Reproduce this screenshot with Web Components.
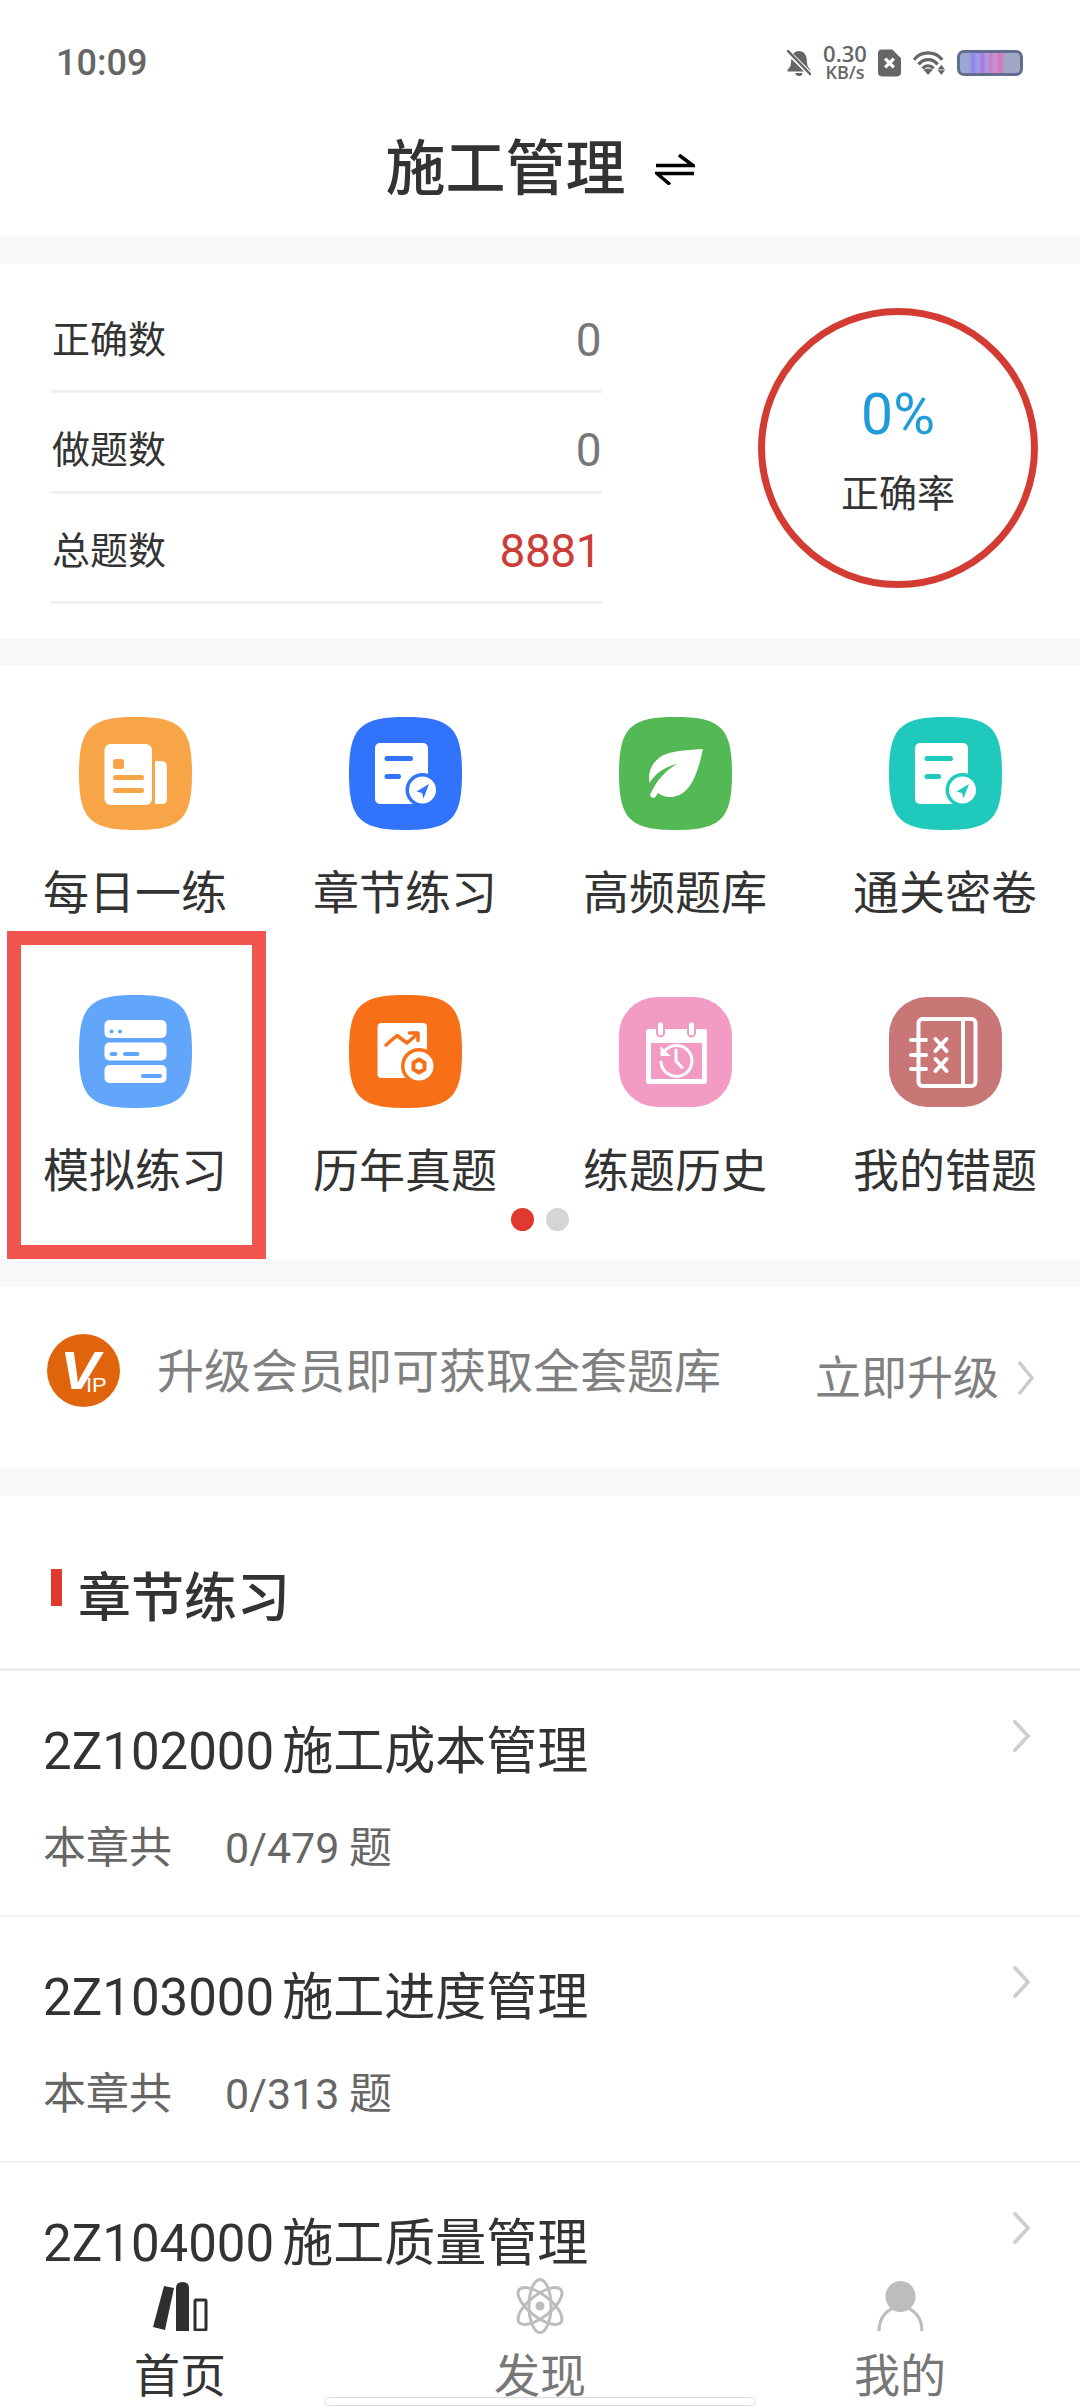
<!DOCTYPE html>
<html lang="zh-CN">
<head>
<meta charset="utf-8">
<title>施工管理</title>
<style>
  html, body { margin: 0; padding: 0; }
  body {
    width: 1080px;
    height: 2408px;
    overflow: hidden;
    background: #f8f8f8;
    color: #333;
    font-family: Roboto, "Noto Sans CJK SC", sans-serif;
  }
</style>
</head>
<body>
<app-shell>
  <status-bar time="10:09"></status-bar>
  <title-bar>施工管理</title-bar>

  <stats-card>
    <stat-row label="正确数" value="0" style="--h:129px;--pt:26px"></stat-row>
    <stat-row label="做题数" value="0" style="--h:101px;--pt:16px"></stat-row>
    <stat-row label="总题数" value="8881" style="--h:110px;--pt:7px;--value:#cc3d38"></stat-row>
  </stats-card>

  <feature-grid>
    <feature-tile label="每日一练" color="#f8a548">
      <svg viewBox="0 0 113 113">
        <path fill="#fff" d="M76 44h6q6 0 6 6v32q0 5-5 5h-7z"/>
        <rect x="25.500" y="27" width="47.500" height="61" rx="6" fill="#fff"/>
        <rect x="34" y="42" width="11" height="10" rx="2.500" fill="#f8a548"/>
        <rect x="34" y="58" width="31" height="5" rx="2.500" fill="#f8a548"/>
        <rect x="34" y="71" width="31" height="5" rx="2.500" fill="#f8a548"/>
      </svg>
    </feature-tile>
    <feature-tile label="章节练习" color="#3174fb">
      <svg viewBox="0 0 113 113">
        <rect x="26" y="26" width="53" height="61" rx="5" fill="#fff"/>
        <rect x="35.500" y="39" width="28.500" height="5" rx="2.500" fill="#3174fb"/>
        <rect x="35.500" y="57" width="16.500" height="5" rx="2.500" fill="#3174fb"/>
        <circle cx="73.500" cy="73" r="17" fill="#3174fb"/>
        <circle cx="73.500" cy="73" r="13.500" fill="#fff"/>
        <path fill="#3174fb" d="M80 67 67.500 74.500l5.500 1.500 1.500 5.500z"/>
      </svg>
    </feature-tile>
    <feature-tile label="高频题库" color="#53b954">
      <svg viewBox="0 0 113 113">
        <path fill="#fff" d="M84 32C72 33 50 33 40 41 31 48 29 57 30.500 66 36 57 45 50 58 47 47 53 37 64 31 78c0 3 5 4 6 1l2-3c8 6 21 6 30-5 8-9 12-26 15-39z"/>
      </svg>
    </feature-tile>
    <feature-tile label="通关密卷" color="#1fc9bc">
      <svg viewBox="0 0 113 113">
        <rect x="26" y="26" width="53" height="61" rx="5" fill="#fff"/>
        <rect x="35.500" y="39" width="28.500" height="5" rx="2.500" fill="#1fc9bc"/>
        <rect x="35.500" y="57" width="16.500" height="5" rx="2.500" fill="#1fc9bc"/>
        <circle cx="73.500" cy="73" r="17" fill="#1fc9bc"/>
        <circle cx="73.500" cy="73" r="13.500" fill="#fff"/>
        <path fill="#1fc9bc" d="M80 67 67.500 74.500l5.500 1.500 1.500 5.500z"/>
      </svg>
    </feature-tile>

    <feature-tile label="模拟练习" color="#62a6fc">
      <svg viewBox="0 0 113 113">
        <rect x="25.500" y="25" width="62" height="18" rx="5" fill="#fff"/>
        <rect x="25.500" y="47.500" width="62" height="18" rx="5" fill="#fff"/>
        <rect x="25.500" y="70" width="62" height="18" rx="5" fill="#fff"/>
        <circle cx="32.500" cy="36.500" r="2" fill="#62a6fc"/>
        <circle cx="41" cy="36.500" r="2" fill="#62a6fc"/>
        <rect x="30.500" y="57" width="8" height="4" rx="2" fill="#62a6fc"/>
        <rect x="44" y="57" width="16.500" height="4" rx="2" fill="#62a6fc"/>
        <rect x="62" y="79" width="21" height="4" rx="2" fill="#62a6fc"/>
      </svg>
    </feature-tile>
    <feature-tile label="历年真题" color="#f76f17">
      <svg viewBox="0 0 113 113">
        <rect x="28.500" y="28" width="49.500" height="55" rx="4" fill="#fff"/>
        <path fill="none" stroke="#f76f17" stroke-width="3.500" stroke-linecap="round" stroke-linejoin="round" d="M37 50 48 40.500 58 48 69 38.500M60.500 38H69v7.500"/>
        <circle cx="70" cy="71" r="18" fill="#f76f17"/>
        <circle cx="70" cy="71" r="14.500" fill="#fff"/>
        <path fill="none" stroke="#f76f17" stroke-width="4" stroke-linejoin="round" d="M70 64.500l5.500 3.200v6.600L70 77.500l-5.500-3.200v-6.600z"/>
      </svg>
    </feature-tile>
    <feature-tile label="练题历史" color="#f29cc3" shape="round">
      <svg viewBox="0 0 113 110">
        <path fill="#fff" d="M30 32h55q3 0 3 3v49q0 3-3 3H30q-3 0-3-3V35q0-3 3-3zm2 14v36h51V46z"/>
        <rect x="38" y="24.500" width="7" height="15" rx="3.500" fill="#fff" stroke="#f29cc3" stroke-width="2"/>
        <rect x="69" y="24.500" width="7" height="15" rx="3.500" fill="#fff" stroke="#f29cc3" stroke-width="2"/>
        <path fill="none" stroke="#fff" stroke-width="3" stroke-linecap="round" d="M46 53.500A15.500 15.500 0 1 1 42 65M57 53v11l6 6.500"/>
        <path fill="#fff" d="M41.500 49v10h10z"/>
      </svg>
    </feature-tile>
    <feature-tile label="我的错题" color="#c87676" shape="round">
      <svg viewBox="0 0 113 110">
        <rect x="29.500" y="22" width="57" height="67" rx="4" fill="none" stroke="#fff" stroke-width="4"/>
        <path fill="none" stroke="#fff" stroke-width="4" stroke-linecap="round" d="M74 23v66M22 43h15M22 58h15M22 72h15M46.500 42l11 12M57.500 42l-11 12M46.500 62l11 12M57.500 62l-11 12"/>
      </svg>
    </feature-tile>
  </feature-grid>

  <vip-banner action="立即升级">升级会员即可获取全套题库</vip-banner>

  <section-head>章节练习</section-head>
  <chapter-row code="2Z102000" name="施工成本管理" count="0/479"></chapter-row>
  <chapter-row code="2Z103000" name="施工进度管理" count="0/313"></chapter-row>
  <chapter-row code="2Z104000" name="施工质量管理"></chapter-row>

  <tab-bar slot="tabs">
    <tab-item label="首页" active>
      <svg width="55" height="49" viewBox="0 0 55 49">
        <path fill="#2f2f2f" d="M11 4l10 2-9 42-12-3z"/>
        <path fill="#2f2f2f" d="M23 6q0-6 6.500-6T36 6v43H23z"/>
        <rect x="42" y="18" width="11" height="30" rx="1" fill="none" stroke="#2f2f2f" stroke-width="3"/>
      </svg>
    </tab-item>
    <tab-item label="发现">
      <svg width="54" height="56" viewBox="-27 -28 54 56">
        <g fill="none" stroke="#bdbdbd" stroke-width="3">
          <ellipse rx="11" ry="26.500"/>
          <ellipse rx="11" ry="26.500" transform="rotate(52)"/>
          <ellipse rx="11" ry="26.500" transform="rotate(-52)"/>
        </g>
        <circle r="4.500" fill="#bdbdbd"/>
      </svg>
    </tab-item>
    <tab-item label="我的">
      <svg width="47" height="50" viewBox="0 0 47 50">
        <ellipse cx="23.500" cy="15.500" rx="15" ry="15.500" fill="#bdbdbd"/>
        <path fill="none" stroke="#bdbdbd" stroke-width="3" d="M2 50C2 36 11 26 23.500 26S45 36 45 50"/>
      </svg>
    </tab-item>
  </tab-bar>
</app-shell>

<script>
class AppShell extends HTMLElement {
  constructor() {
    super();
    this.attachShadow({ mode: 'open' });
    this.shadowRoot.innerHTML = `
      <style>
        :host { display: flex; flex-direction: column; height: 2408px; }
        .content { flex: 1; min-height: 0; overflow: hidden; }
      </style>
      <div class="content"><slot></slot></div>
      <slot name="tabs"></slot>
    `;
  }
}

class StatusBar extends HTMLElement {
  connectedCallback() {
    this.attachShadow({ mode: 'open' });
    this.shadowRoot.innerHTML = `
      <style>
        :host { display: flex; align-items: center; height: 100px; padding: 26px 57px 0 56px; box-sizing: border-box; background: #fff; color: #666; }
        .time { font-size: 36px; line-height: 44px; font-weight: 500; }
        .right { margin-left: auto; display: flex; align-items: center; }
        svg { display: block; }
        .speed { width: 44px; margin: 0 11px 0 12px; text-align: center; font-weight: 600; font-family: "Open Sans", sans-serif; }
        .speed div { font-size: 22px; line-height: 19px; white-space: nowrap; }
        .speed div + div { font-size: 18px; }
        .battery { width: 66px; height: 26px; box-sizing: border-box; margin-left: 12px; border: 3px solid #636d8f; border-radius: 7px;
          background: linear-gradient(90deg, #9ba8d2 0 14%, #8d86f0 22%, #a1a0e0 30%, #a978e0 38%, #b09adf 44%, #c87ac9 52%, #c296d0 58%, #d874b8 66%, #a1a8c7 76%); }
      </style>
      <span class="time">${this.getAttribute('time')}</span>
      <div class="right">
        <svg width="24" height="26" viewBox="0 0 24 26">
          <path fill="#666" d="M12 1c4 0 7 3 7.500 7l1 8 3 4v1.500H.5V20l3-4 1-8C5 4 8 1 12 1zM8.500 23h7a3.500 3 0 0 1-7 0z"/>
          <path stroke="#fff" stroke-width="5" d="M0 1l24 24"/>
          <path stroke="#666" stroke-width="2.500" d="M0 0l24 25"/>
        </svg>
        <div class="speed"><div>0.30</div><div>KB/s</div></div>
        <svg width="23" height="28" viewBox="0 0 24 28">
          <path fill="#666" d="M4 0h11l9 9v15q0 4-4 4H4q-4 0-4-4V4q0-4 4-4z"/>
          <path stroke="#fff" stroke-width="3.500" d="M7.500 9.500l9 9M16.500 9.500l-9 9"/>
        </svg>
        <svg width="32" height="26" viewBox="0 0 35 26" style="margin-left:12px">
          <g fill="none" stroke="#666" stroke-width="3.500">
            <path d="M1 9.500C9-.5 24-.5 32 9.500"/>
            <path d="M6 14.500C12 7.500 21 7.500 27 14.500"/>
            <path d="M10.500 19C14 15 19 15 22.500 19"/>
          </g>
          <path fill="#666" d="M11.500 20.500q5-3 10 0l-5 5.500zM31 15l4 5h-8zM31 26l-4-5h8z"/>
        </svg>
        <div class="battery"></div>
      </div>
    `;
  }
}

class TitleBar extends HTMLElement {
  constructor() {
    super();
    this.attachShadow({ mode: 'open' });
    this.shadowRoot.innerHTML = `
      <style>
        :host { display: flex; justify-content: center; align-items: center; gap: 29px; height: 135px; padding-top: 5px; box-sizing: border-box; background: #fff; font-size: 60px; line-height: 80px; font-weight: 500; color: #333; }
        svg { display: block; margin-top: -1px; }
      </style>
      <span><slot></slot></span>
      <svg width="40" height="31" viewBox="0 0 40 31">
        <path fill="none" stroke="#000" stroke-width="3.500" d="M1 11.500h37L24 1M39 19.500H2l13 11"/>
      </svg>
    `;
  }
}

class StatsCard extends HTMLElement {
  constructor() {
    super();
    this.attachShadow({ mode: 'open' });
    this.shadowRoot.innerHTML = `
      <style>
        :host { display: flex; height: 374px; margin-top: 29px; background: #fff; }
        .rows { width: 551px; margin-left: 51px; }
        .ring { width: 280px; height: 280px; box-sizing: border-box; margin: 44px 42px 0 auto; border: 7px solid #d33c33; border-radius: 50%;
          display: flex; flex-direction: column; align-items: center; }
        .pct { margin-top: 65px; font-size: 57px; line-height: 70px; color: #1f9bd8; }
        .name { margin-top: 19px; font-size: 38px; line-height: 50px; color: #333; }
      </style>
      <div class="rows"><slot></slot></div>
      <div class="ring"><span class="pct">0%</span><span class="name">正确率</span></div>
    `;
  }
}

class StatRow extends HTMLElement {
  connectedCallback() {
    this.attachShadow({ mode: 'open' });
    this.shadowRoot.innerHTML = `
      <style>
        :host { display: flex; justify-content: space-between; align-items: center; box-sizing: border-box; height: var(--h); padding: var(--pt) 1px 0 1px; border-bottom: 3px solid #f0f0f0; }
        .label { font-size: 38px; line-height: 50px; color: #333; }
        .value { font-size: 46px; line-height: 50px; letter-spacing: -.5px; color: var(--value, #777); }
      </style>
      <span class="label">${this.getAttribute('label')}</span>
      <span class="value">${this.getAttribute('value')}</span>
    `;
  }
}

class FeatureGrid extends HTMLElement {
  constructor() {
    super();
    this.attachShadow({ mode: 'open' });
    this.shadowRoot.innerHTML = `
      <style>
        :host { display: block; position: relative; height: 593px; margin-top: 28px; padding-top: 51px; box-sizing: border-box; background: #fff; }
        .grid { display: grid; grid-template-columns: repeat(4, 270px); row-gap: 72px; }
        .dots { display: flex; justify-content: center; gap: 12px; margin-top: 7px; }
        .dots i { width: 23px; height: 23px; border-radius: 50%; background: #d5d5d5; }
        .dots i:first-child { background: #e03a2e; }
        /* annotation frame drawn over the fifth tile */
        .mark { position: absolute; left: 7px; top: 265px; width: 259px; height: 328px; box-sizing: border-box; border: 14px solid #f0554f; }
      </style>
      <div class="grid"><slot></slot></div>
      <div class="dots"><i></i><i></i></div>
      <div class="mark"></div>
    `;
  }
}

class FeatureTile extends HTMLElement {
  connectedCallback() {
    const color = this.getAttribute('color');
    const round = this.getAttribute('shape') === 'round';
    this.attachShadow({ mode: 'open' });
    this.shadowRoot.innerHTML = `
      <style>
        :host { display: flex; flex-direction: column; align-items: center; }
        .icon { position: relative; width: 113px; height: 113px; }
        .icon.round { width: 113px; height: 110px; margin: 2px 0 1px; border-radius: 38px; background: ${color}; }
        .icon > svg { display: block; width: 113px; height: 113px; }
        ::slotted(svg) { position: absolute; left: 0; top: 0; width: 100%; height: 100%; }
        .label { margin-top: 33px; font-size: 46px; line-height: 60px; color: #333; white-space: nowrap; }
      </style>
      <div class="icon ${round ? 'round' : ''}">
        ${round ? '' : `<svg viewBox="0 0 113 113"><path fill="${color}" d="M56.500 0C102 0 113 11 113 56.500S102 113 56.500 113 0 102 0 56.500 11 0 56.500 0z"/></svg>`}
        <slot></slot>
      </div>
      <span class="label">${this.getAttribute('label')}</span>
    `;
  }
}

class VipBanner extends HTMLElement {
  connectedCallback() {
    this.attachShadow({ mode: 'open' });
    this.shadowRoot.innerHTML = `
      <style>
        :host { display: flex; align-items: center; height: 181px; margin-top: 28px; padding: 0 46px 0 47px; box-sizing: border-box; background: #fff; color: #808080; font-size: 46px; line-height: 60px; }
        .badge { position: relative; flex: none; width: 73px; height: 73px; border-radius: 50%; background: #e0640c; color: #fff; margin: 0 37px 15px 0; overflow: hidden; }
        .badge span { position: absolute; font-family: "Liberation Sans", sans-serif; }
        .v { left: 13px; top: 28px; font-size: 54px; line-height: 16px; font-style: italic; font-weight: 700; transform: scaleX(1.1); transform-origin: left; }
        .ip { left: 39px; top: 46px; font-size: 20px; line-height: 10px; transform: scaleX(1.1); transform-origin: left; }
        .text { margin-bottom: 11px; font-size: 47px; }
        .action { margin-left: auto; display: flex; align-items: center; gap: 18px; }
        svg { display: block; }
      </style>
      <div class="badge"><span class="v">V</span><span class="ip">IP</span></div>
      <span class="text"><slot></slot></span>
      <div class="action">
        <span>${this.getAttribute('action')}</span>
        <svg width="17" height="34" viewBox="0 0 17 34"><path fill="none" stroke="#cbcbcb" stroke-width="3.500" d="M2 1l13 16L2 33"/></svg>
      </div>
    `;
  }
}

class SectionHead extends HTMLElement {
  constructor() {
    super();
    this.attachShadow({ mode: 'open' });
    this.shadowRoot.innerHTML = `
      <style>
        :host { display: flex; align-items: flex-start; height: 175px; margin-top: 28px; padding-left: 51px; box-sizing: border-box; background: #fff; border-bottom: 3px solid #eee; }
        .bar { width: 11px; height: 37px; margin: 73px 16px 0 0; background: #e03a2e; }
        .title { margin-top: 73px; font-size: 53px; line-height: 60px; font-weight: 500; color: #333; }
      </style>
      <i class="bar"></i>
      <span class="title"><slot></slot></span>
    `;
  }
}

class ChapterRow extends HTMLElement {
  connectedCallback() {
    const count = this.getAttribute('count');
    this.attachShadow({ mode: 'open' });
    this.shadowRoot.innerHTML = `
      <style>
        :host { display: flex; justify-content: space-between; height: 246px; padding: 0 50px 0 43px; box-sizing: border-box; background: #fff; border-bottom: 2px solid #f0f0f0; }
        .name { margin-top: 51px; font-size: 51px; line-height: 60px; color: #333; white-space: nowrap; }
        .name b { font-weight: 400; margin-right: 8px; }
        .sub { display: flex; margin-top: 41px; font-size: 43px; line-height: 50px; color: #666; }
        .sub .a { width: 182px; }
        .sub .b { width: 124px; }
        svg { display: block; margin-top: 48px; }
      </style>
      <div>
        <div class="name"><b>${this.getAttribute('code')}</b>${this.getAttribute('name')}</div>
        ${count ? `<div class="sub"><span class="a">本章共</span><span class="b">${count}</span><span>题</span></div>` : ''}
      </div>
      <svg width="17" height="34" viewBox="0 0 18 34"><path fill="none" stroke="#cfcfcf" stroke-width="4" stroke-linecap="round" d="M2 2l14 15L2 32"/></svg>
    `;
  }
}

class TabBar extends HTMLElement {
  constructor() {
    super();
    this.attachShadow({ mode: 'open' });
    this.shadowRoot.innerHTML = `
      <style>
        :host { display: grid; grid-template-columns: repeat(3, 1fr); position: relative; height: 138px; padding-top: 8px; box-sizing: border-box; background: #fff; }
        .home { position: absolute; left: 324px; top: 127px; width: 432px; height: 9px; box-sizing: border-box; border: 1px solid #ddd; border-radius: 5px; background: #fff; }
      </style>
      <slot></slot>
      <div class="home"></div>
    `;
  }
}

class TabItem extends HTMLElement {
  connectedCallback() {
    this.attachShadow({ mode: 'open' });
    this.shadowRoot.innerHTML = `
      <style>
        :host { display: flex; flex-direction: column; align-items: center; color: #777; }
        :host([active]) { color: #333; }
        .icon { height: 56px; display: flex; align-items: center; }
        .label { margin-top: 17px; font-size: 46px; line-height: 50px; }
      </style>
      <div class="icon"><slot></slot></div>
      <span class="label">${this.getAttribute('label')}</span>
    `;
  }
}

customElements.define('app-shell', AppShell);
customElements.define('status-bar', StatusBar);
customElements.define('title-bar', TitleBar);
customElements.define('stats-card', StatsCard);
customElements.define('stat-row', StatRow);
customElements.define('feature-grid', FeatureGrid);
customElements.define('feature-tile', FeatureTile);
customElements.define('vip-banner', VipBanner);
customElements.define('section-head', SectionHead);
customElements.define('chapter-row', ChapterRow);
customElements.define('tab-bar', TabBar);
customElements.define('tab-item', TabItem);
</script>
</body>
</html>
